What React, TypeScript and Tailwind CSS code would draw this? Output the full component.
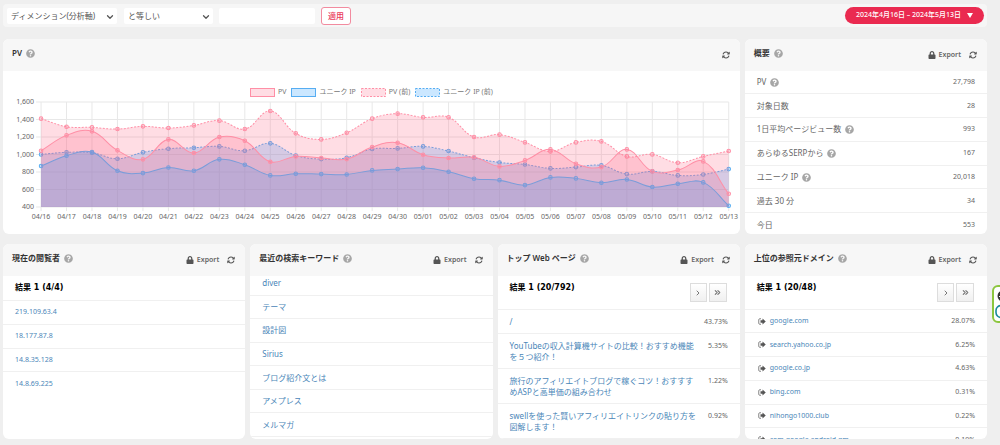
import type { ReactNode } from "react";
import { FaLock, FaQuestionCircle } from "react-icons/fa";
import { FaArrowsRotate } from "react-icons/fa6";
import { FiChevronDown, FiChevronRight, FiChevronsRight } from "react-icons/fi";

type Series = {
  label: string;
  stroke: string;
  fill: string;
  dashed: boolean;
  values: number[];
};

const PINK = "#ff8fa6";
const PINK_FILL = "rgba(255,99,132,0.22)";
const BLUE = "#56adf2";
const BLUE_FILL = "rgba(54,162,255,0.26)";

const SERIES: Series[] = [
  {
    label: "PV",
    stroke: PINK,
    fill: PINK_FILL,
    dashed: false,
    values: [1044, 1219, 1265, 1048, 945, 1173, 1017, 1200, 1158, 918, 979, 960, 948, 1086, 1135, 998, 960, 968, 865, 933, 1059, 895, 857, 1059, 808, 823, 922, 552],
  },
  {
    label: "ユニーク IP",
    stroke: BLUE,
    fill: BLUE_FILL,
    dashed: false,
    values: [869, 987, 1028, 815, 788, 853, 815, 945, 884, 762, 781, 777, 773, 819, 834, 849, 804, 724, 708, 651, 739, 728, 678, 716, 629, 667, 682, 415],
  },
  {
    label: "PV (前)",
    stroke: PINK,
    fill: PINK_FILL,
    dashed: true,
    values: [1410, 1318, 1310, 1291, 1322, 1303, 1333, 1387, 1291, 1497, 1242, 1173, 1249, 1410, 1467, 1425, 1425, 1200, 1227, 1139, 1036, 1139, 1150, 979, 1002, 907, 979, 1040],
  },
  {
    label: "ユニーク IP (前)",
    stroke: BLUE,
    fill: BLUE_FILL,
    dashed: true,
    values: [1002, 1025, 1021, 952, 1025, 1067, 1078, 1093, 1044, 1128, 990, 948, 964, 1063, 1070, 1093, 1040, 964, 910, 887, 842, 857, 876, 777, 808, 762, 773, 834],
  },
];

const DAYS = Array.from({ length: 28 }, (_, i) => {
  const day = 16 + i;
  return day <= 30 ? `04/${day}` : `05/${String(day - 30).padStart(2, "0")}`;
});
const TICKS = [1600, 1400, 1200, 1000, 800, 600, 400];

const PLOT = { left: 38, right: 725, top: 4, bottom: 109 };
const xAt = (i: number) => PLOT.left + (i * (PLOT.right - PLOT.left)) / (DAYS.length - 1);
const yAt = (v: number) => PLOT.top + ((1600 - v) * (PLOT.bottom - PLOT.top)) / 1200;

// cubic spline with tension 0.4
function splinePath(values: number[]) {
  const pts = values.map((v, i) => ({ x: xAt(i), y: yAt(v) }));
  const ctrl = pts.map((p, i) => {
    const prev = pts[i - 1] ?? p;
    const next = pts[i + 1] ?? p;
    const d01 = Math.hypot(p.x - prev.x, p.y - prev.y);
    const d12 = Math.hypot(next.x - p.x, next.y - p.y);
    const fa = (0.4 * d01) / (d01 + d12);
    const fb = (0.4 * d12) / (d01 + d12);
    return {
      inX: p.x - fa * (next.x - prev.x),
      inY: p.y - fa * (next.y - prev.y),
      outX: p.x + fb * (next.x - prev.x),
      outY: p.y + fb * (next.y - prev.y),
    };
  });
  return pts.reduce(
    (d, p, i) =>
      i === 0
        ? `M${p.x},${p.y}`
        : `${d} C${ctrl[i - 1].outX},${ctrl[i - 1].outY} ${ctrl[i].inX},${ctrl[i].inY} ${p.x},${p.y}`,
    ""
  );
}

function Chart() {
  return (
    <div className="flex flex-col pt-[15px]">
      <div className="flex justify-center gap-[5px] text-[7px] leading-[12px] text-[#777]">
        {SERIES.map((s) => (
          <div key={s.label} className="flex items-center gap-[3px]">
            <svg width="25" height="9" viewBox="0 0 25 9">
              <rect x="0.5" y="0.5" width="24" height="8" fill={s.fill} stroke={s.stroke} strokeDasharray={s.dashed ? "2 1.5" : undefined} />
            </svg>
            {s.label}
          </div>
        ))}
      </div>
      <svg viewBox="0 0 736 130" className="w-full" role="img" aria-label="PV">
        {TICKS.map((t) => (
          <g key={t}>
            <line x1={PLOT.left - 5} x2={PLOT.right} y1={yAt(t)} y2={yAt(t)} stroke="#e8e8e8" />
            <text x={PLOT.left - 7} y={yAt(t) + 2} textAnchor="end" className="fill-[#666] text-[7px]">
              {t.toLocaleString("en-US")}
            </text>
          </g>
        ))}
        {DAYS.map((d, i) => (
          <g key={d}>
            <line x1={xAt(i)} x2={xAt(i)} y1={PLOT.top} y2={PLOT.bottom + 4} stroke="#e8e8e8" />
            <text x={xAt(i)} y={PLOT.bottom + 12} textAnchor="middle" className="fill-[#666] text-[7px]">
              {d}
            </text>
          </g>
        ))}
        {[...SERIES].reverse().map((s) => {
          const line = splinePath(s.values);
          return (
            <g key={s.label} fill={s.fill} stroke={s.stroke}>
              <path d={`${line} L${PLOT.right},${PLOT.bottom} L${PLOT.left},${PLOT.bottom} Z`} stroke="none" />
              <path d={line} fill="none" strokeDasharray={s.dashed ? "2 1.5" : undefined} />
              {s.values.map((v, i) => (
                <circle key={i} cx={xAt(i)} cy={yAt(v)} r="1.8" />
              ))}
            </g>
          );
        })}
      </svg>
    </div>
  );
}

function Help() {
  return <FaQuestionCircle className="inline-block size-[9px] shrink-0 text-[#a6a6a6]" />;
}

function ExitIcon() {
  return (
    <svg viewBox="0 0 16 14" className="h-[7px] w-2 shrink-0">
      <path d="M6 1.5H3.5A2 2 0 0 0 1.5 3.5V10.5A2 2 0 0 0 3.5 12.5H6" fill="none" stroke="#777" strokeWidth="1.8" />
      <path d="M5 4.5H9V1L15.5 7L9 13V9.5H5Z" fill="#555" />
    </svg>
  );
}

function Card({ title, canExport = true, className = "", children }: { title: string; canExport?: boolean; className?: string; children: ReactNode }) {
  return (
    <section className={`flex h-[195px] min-w-0 flex-col overflow-hidden rounded-md bg-white ${className}`}>
      <header className="flex h-8 shrink-0 items-center justify-between bg-[#f7f7f7] pr-[10px] pl-[9px]">
        <h2 className="flex items-center gap-1 pb-1 text-[8px] font-semibold text-[#333]">
          {title}
          <Help />
        </h2>
        <div className="flex items-center gap-2 text-[#555]">
          {canExport && (
            <button type="button" className="flex items-center gap-[3px] text-[7px] font-semibold text-[#666]">
              <FaLock className="size-2 text-[#555]" />
              Export
            </button>
          )}
          <button type="button" aria-label="更新">
            <FaArrowsRotate className="size-2" />
          </button>
        </div>
      </header>
      <div className="min-h-0 flex-1 overflow-hidden">{children}</div>
    </section>
  );
}

function ResultHead({ text, paged = false }: { text: string; paged?: boolean }) {
  return (
    <div className={`flex items-start justify-between border-b border-[#f0f0f0] pr-[13px] pl-3 ${paged ? "h-[34px]" : "h-[25px]"}`}>
      <h3 className="pt-[6px] font-['DejaVu_Sans','Noto_Sans_CJK_JP',sans-serif] text-[8px] leading-[12px] font-bold text-black">{text}</h3>
      {paged && (
        <div className="flex gap-[2px] pt-[7px] text-[#777]">
          <button type="button" aria-label="次へ" className="flex h-[19px] w-[17px] items-center justify-center border border-[#ddd] bg-linear-to-b from-white to-[#f0f0f0]">
            <FiChevronRight className="size-2 stroke-3" />
          </button>
          <button type="button" aria-label="最後へ" className="flex h-[19px] w-[18px] items-center justify-center border border-[#ddd] bg-linear-to-b from-white to-[#f0f0f0]">
            <FiChevronsRight className="size-[9px] stroke-3" />
          </button>
        </div>
      )}
    </div>
  );
}

const SUMMARY = [
  { label: "PV", value: "27,798", help: true },
  { label: "対象日数", value: "28", help: false },
  { label: "1日平均ページビュー数", value: "993", help: true },
  { label: "あらゆるSERPから", value: "167", help: true },
  { label: "ユニーク IP", value: "20,018", help: true },
  { label: "過去 30 分", value: "34", help: false },
  { label: "今日", value: "553", help: false },
];
const VISITORS = ["219.109.63.4", "18.177.87.8", "14.8.35.128", "14.8.69.225"];
const KEYWORDS = ["diver", "テーマ", "設計図", "Sirius", "ブログ紹介文とは", "アメプレス", "メルマガ"];
const PAGES = [
  { title: "/", share: "43.73%" },
  { title: "YouTubeの収入計算機サイトの比較！おすすめ機能\nを５つ紹介！", share: "5.35%" },
  { title: "旅行のアフィリエイトブログで稼ぐコツ！おすすす\nめASPと高単価の組み合わせ", share: "1.22%" },
  { title: "swellを使った賢いアフィリエイトリンクの貼り方を\n図解します！", share: "0.92%" },
];
const DOMAINS = [
  { host: "google.com", share: "28.07%" },
  { host: "search.yahoo.co.jp", share: "6.25%" },
  { host: "google.co.jp", share: "4.63%" },
  { host: "bing.com", share: "0.31%" },
  { host: "nihongo1000.club", share: "0.22%" },
  { host: "com.google.android.gm", share: "0.19%" },
];

export default function App() {
  return (
    <div className="relative min-h-screen overflow-hidden bg-[#efefef] pt-1 pr-[13px] pb-[6px] pl-[3px] font-['Noto_Sans','Noto_Sans_CJK_JP',sans-serif] text-[#666]">
      <form className="flex h-[23px] items-center rounded-sm bg-[#f6f6f6] pr-[3px] pl-1 text-[8px] text-[#555]">
        <div className="relative mr-[7px] w-[110px]">
          <select aria-label="ディメンション" className="h-4 w-full appearance-none rounded-xs bg-white pl-1">
            <option>ディメンション(分析軸)</option>
          </select>
          <FiChevronDown className="pointer-events-none absolute top-1 right-[2px] size-[10px] stroke-3" />
        </div>
        <div className="relative mr-[6px] w-[89px]">
          <select aria-label="条件" className="h-4 w-full appearance-none rounded-xs bg-white pl-1">
            <option>と等しい</option>
          </select>
          <FiChevronDown className="pointer-events-none absolute top-1 right-[2px] size-[10px] stroke-3" />
        </div>
        <input type="text" aria-label="値" className="mr-[6px] h-4 w-24 rounded-xs bg-white px-1" />
        <button type="button" className="h-[18px] w-[30px] rounded-[3px] border border-[#f28b9f] bg-white font-medium text-[#ea3a5b]">適用</button>
        <button type="button" className="ml-auto flex h-[17px] w-[139px] items-center justify-center gap-[6px] rounded-full bg-[#ea2a50] text-[7px] font-medium text-white">
          2024年4月16日 – 2024年5月13日
          <svg viewBox="0 0 6 5" className="h-[5px] w-[6px]">
            <path d="M0 0H6L3 5Z" fill="currentColor" />
          </svg>
        </button>
      </form>

      <main className="grid grid-cols-4 gap-x-[5px] gap-y-[10px] pt-3">
        <Card title="PV" canExport={false} className="col-span-3">
          <Chart />
        </Card>

        <Card title="概要">
          <table className="h-[166px] w-full text-[8px] leading-[12px]">
            <tbody>
              {SUMMARY.map((row) => (
                <tr key={row.label} className="border-b border-[#f0f0f0]">
                  <th scope="row" className="pl-3 text-left font-normal">
                    <span className="flex items-center gap-1">
                      {row.label}
                      {row.help && <Help />}
                    </span>
                  </th>
                  <td className="pr-3 text-right text-[7px]">{row.value}</td>
                </tr>
              ))}
            </tbody>
          </table>
        </Card>

        <Card title="現在の閲覧者">
          <ResultHead text="結果 1 (4/4)" />
          <ul className="grid h-[95px] auto-rows-fr text-[7px] text-[#4a86b8]">
            {VISITORS.map((ip) => (
              <li key={ip} className="flex items-center border-b border-[#f0f0f0] pl-3 last:border-0">
                <a href="#">{ip}</a>
              </li>
            ))}
          </ul>
        </Card>

        <Card title="最近の検索キーワード">
          <ul className="-mt-1 grid h-[165px] auto-rows-fr text-[8px] text-[#4a86b8]">
            {KEYWORDS.map((word) => (
              <li key={word} className="flex items-center border-b border-[#f0f0f0] pl-3">
                <a href="#">{word}</a>
              </li>
            ))}
          </ul>
        </Card>

        <Card title="トップ Web ページ">
          <ResultHead text="結果 1 (20/792)" paged />
          <table className="w-full text-[8px] leading-[11px]">
            <tbody>
              {PAGES.map((page) => (
                <tr key={page.title} className="border-b border-[#f0f0f0] align-top">
                  <td className="py-[6px] pl-3 whitespace-pre text-[#4a86b8]">
                    <a href="#">{page.title}</a>
                  </td>
                  <td className="py-[6px] pr-3 text-right text-[7px]">{page.share}</td>
                </tr>
              ))}
            </tbody>
          </table>
        </Card>

        <Card title="上位の参照元ドメイン">
          <ResultHead text="結果 1 (20/48)" paged />
          <table className="h-[142px] w-full text-[7px] leading-[12px]">
            <tbody>
              {DOMAINS.map((d) => (
                <tr key={d.host} className="border-b border-[#f0f0f0]">
                  <td className="pl-[13px] text-[#4a86b8]">
                    <a href="#" className="flex items-center gap-1">
                      <ExitIcon />
                      {d.host}
                    </a>
                  </td>
                  <td className="pr-3 text-right">{d.share}</td>
                </tr>
              ))}
            </tbody>
          </table>
        </Card>
      </main>

      {/* floating side tab, mostly off the right edge */}
      <div className="absolute top-[285px] -right-8 h-[38px] w-10 rounded-md border-2 border-[#8cc63f] bg-white">
        <svg viewBox="0 0 36 34" className="h-full w-full">
          <circle cx="9" cy="9" r="5.5" fill="#333" />
          <path d="M5 9.5H9" stroke="#fff" strokeWidth="1.2" />
          <rect x="2" y="18.5" width="16" height="12" rx="5" fill="#fff" stroke="#1a8a9a" strokeWidth="1.6" />
        </svg>
      </div>
    </div>
  );
}
